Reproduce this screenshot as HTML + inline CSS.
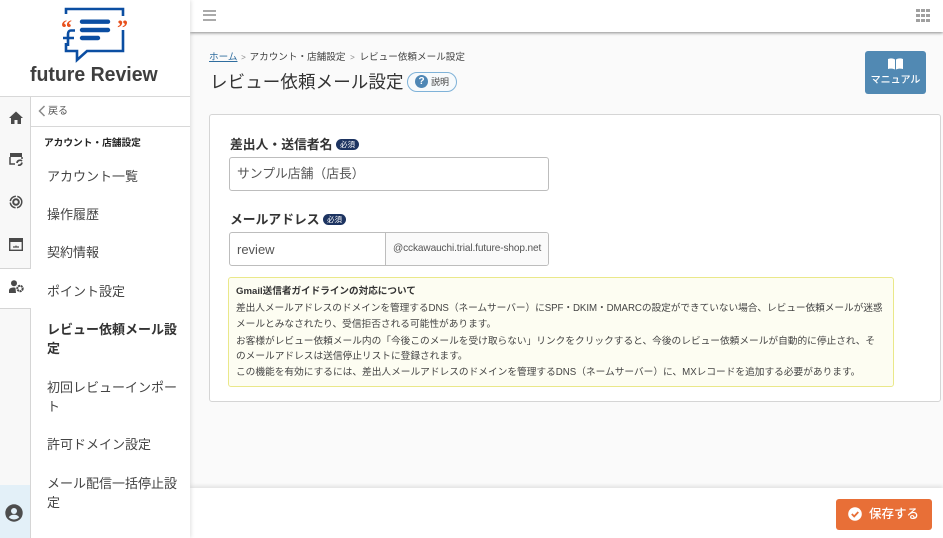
<!DOCTYPE html>
<html lang="ja"><head><meta charset="utf-8"><title>レビュー依頼メール設定</title>
<style>
*{box-sizing:border-box;margin:0;padding:0}
html,body{width:943px;height:538px;overflow:hidden;background:#fafafa;font-family:"Liberation Sans","Noto Sans CJK JP",sans-serif;color:#333;text-spacing-trim:space-all}
.a{position:absolute;white-space:nowrap}
.nav{position:absolute;left:47px;font-size:13px;line-height:19px;color:#444;width:131px}
.req{position:absolute;background:#1d3461;color:#fff;font-size:7.5px;line-height:11px;height:11px;width:23px;text-align:center;border-radius:5.5px}
.lab{position:absolute;left:230px;font-size:12.8px;font-weight:700;color:#333;white-space:nowrap;line-height:18px}
.p{position:absolute;left:236px;font-size:9.7px;line-height:16px;color:#444;white-space:nowrap}
.sep{color:#888;font-size:8px;margin:0 2px}
</style></head><body>
<!-- main top bar -->
<div class="a" style="left:190px;top:0;width:753px;height:32px;background:#fff;box-shadow:0 1px 3px rgba(0,0,0,.45)"></div>
<div class="a" style="left:203px;top:10px;width:13px;height:2px;background:#aaa"></div>
<div class="a" style="left:203px;top:14px;width:13px;height:2px;background:#aaa"></div>
<div class="a" style="left:203px;top:19px;width:13px;height:2px;background:#aaa"></div>
<svg class="a" style="left:916px;top:9px" width="14" height="13" fill="#a0a0a0"><rect x="0" y="0" width="4" height="3"/><rect x="5" y="0" width="4" height="3"/><rect x="10" y="0" width="4" height="3"/><rect x="0" y="5" width="4" height="3"/><rect x="5" y="5" width="4" height="3"/><rect x="10" y="5" width="4" height="3"/><rect x="0" y="10" width="4" height="3"/><rect x="5" y="10" width="4" height="3"/><rect x="10" y="10" width="4" height="3"/></svg>

<!-- footer -->
<div class="a" style="left:190px;top:488px;width:753px;height:50px;background:#fff;box-shadow:0 -2px 4px rgba(0,0,0,.1)"></div>

<!-- sidebar -->
<div class="a" style="left:0;top:0;width:190px;height:538px;background:#fff;box-shadow:1px 0 4px rgba(0,0,0,.12)"></div>
<svg class="a" style="left:60px;top:6px" width="72" height="58" fill="none">
<path d="M6 8V3H63V10M63 24V45H27L17 54V45H6V37" stroke="#0b4ea2" stroke-width="2.6"/>
<path d="M22 15.700H48M22 24H48M22 32H38" stroke="#0b4ea2" stroke-width="4.400" stroke-linecap="round"/>
<path d="M15 24.500H11C9 24.500 8 26 8 28V40M3 32H14" stroke="#0b4ea2" stroke-width="2.600"/>
<text x="1" y="29" font-family="Liberation Serif" font-size="22" font-weight="700" fill="#e8501c">“</text>
<text x="57" y="29" font-family="Liberation Serif" font-size="22" font-weight="700" fill="#e8501c">”</text>
</svg>
<div class="a" style="left:30px;top:63px;font-size:20.500px;font-weight:700;color:#3f3f3f;line-height:24px;transform:scaleX(.95);transform-origin:0 0">future Review</div>
<div class="a" style="left:0;top:96px;width:190px;height:1px;background:#d8d8d8"></div>
<div class="a" style="left:31px;top:126px;width:159px;height:1px;background:#d8d8d8"></div>
<!-- rail -->
<div class="a" style="left:0;top:97px;width:31px;height:172px;background:#f8f8f8;border-right:1px solid #d5d5d5;border-bottom:1px solid #d5d5d5"></div>
<div class="a" style="left:0;top:308px;width:31px;height:177px;background:#f8f8f8;border-right:1px solid #d5d5d5;border-top:1px solid #d5d5d5"></div>
<div class="a" style="left:0;top:485px;width:31px;height:53px;background:#e3f0f8;border-right:1px solid #d5d5d5"></div>
<svg class="a" style="left:9px;top:111px" width="14" height="13" fill="#4a4a4a"><path d="M7 .500 14 7H12V13H8.500V9H5.500V13H2V7H0Z"/></svg>
<svg class="a" style="left:9px;top:152px" width="15" height="14" fill="none"><path d="M1 1H13V5H1Z" fill="#4a4a4a"/><path d="M1 5V12H6M13 5V7" stroke="#4a4a4a" stroke-width="1.500"/><path d="M8 11A3 3 0 0 1 13 9M13 10.500A3 3 0 0 1 9 13" stroke="#4a4a4a" stroke-width="1.700"/></svg>
<svg class="a" style="left:9px;top:195px" width="14" height="14" fill="none"><circle cx="7" cy="7" r="5.800" stroke="#4a4a4a" stroke-width="1.500" stroke-dasharray="8 1.500"/><circle cx="7" cy="7" r="2.800" stroke="#4a4a4a" stroke-width="2"/></svg>
<svg class="a" style="left:9px;top:238px" width="14" height="13" fill="none"><rect x=".7" y=".7" width="12.600" height="11.600" stroke="#4a4a4a" stroke-width="1.400"/><rect x="1" y="1" width="12" height="3" fill="#4a4a4a"/><path d="M4 9H10" stroke="#4a4a4a" stroke-width="1.200"/><path d="M7 7.500V9" stroke="#4a4a4a"/></svg>
<svg class="a" style="left:9px;top:280px" width="15" height="13" fill="#4a4a4a"><circle cx="5" cy="3.300" r="3"/><path d="M0 13V10.500C0 8.500 2 7.500 5 7.500 5.500 7.500 6 7.500 6.500 8L7 13Z"/><circle cx="11" cy="8.500" r="2.700" fill="none" stroke="#4a4a4a" stroke-width="2" stroke-dasharray="2 .6"/></svg>
<svg class="a" style="left:5px;top:504px" width="18" height="18"><circle cx="9" cy="9" r="8.700" fill="#4d4d4d"/><circle cx="9" cy="7" r="3" fill="#e3f0f8"/><path d="M3.800 13.300C5 11.300 7 10.800 9 10.800S13 11.300 14.200 13.300C13 14.700 11 15.500 9 15.500S5 14.700 3.800 13.300Z" fill="#e3f0f8"/></svg>
<!-- menu -->
<svg class="a" style="left:38px;top:105px" width="8" height="12" fill="none"><path d="M6.500 1 1.500 6 6.500 11" stroke="#8a8a8a" stroke-width="1.500"/></svg>
<div class="a" style="left:48px;top:105px;font-size:10px;line-height:14px;color:#555">戻る</div>
<div class="a" style="left:44px;top:136px;font-size:9.700px;line-height:15px;font-weight:700;color:#222">アカウント・店舗設定</div>
<div class="nav" style="top:167px">アカウント一覧</div>
<div class="nav" style="top:205px">操作履歴</div>
<div class="nav" style="top:243px">契約情報</div>
<div class="nav" style="top:282px">ポイント設定</div>
<div class="nav" style="top:320px;font-weight:700;color:#333">レビュー依頼メール設定</div>
<div class="nav" style="top:378px">初回レビューインポート</div>
<div class="nav" style="top:435px">許可ドメイン設定</div>
<div class="nav" style="top:474px">メール配信一括停止設定</div>

<!-- heading -->
<div class="a" style="left:209px;top:51px;font-size:9.600px;line-height:14px;color:#444"><span style="color:#2f6d9f;text-decoration:underline">ホーム</span> <span class="sep" style="margin:0 1px">&gt;</span> アカウント・店舗設定 <span class="sep">&gt;</span> レビュー依頼メール設定</div>
<div class="a" style="left:210px;top:70px;font-size:17.500px;line-height:24px;color:#333;letter-spacing:.1px">レビュー依頼メール設定</div>
<div class="a" style="left:407px;top:72px;width:50px;height:20px;border:1px solid #7fb2d8;border-radius:10px;background:#f7fafc"></div>
<div class="a" style="left:415px;top:75px;width:13px;height:13px;border-radius:50%;background:#4f87b5;color:#fff;font-size:10px;font-weight:700;line-height:13px;text-align:center">?</div>
<div class="a" style="left:431px;top:75px;font-size:9px;line-height:14px;color:#444">説明</div>
<div class="a" style="left:865px;top:51px;width:61px;height:43px;background:#5189b3;border-radius:3px"></div>
<svg class="a" style="left:888px;top:58px" width="15" height="12" fill="#fff"><path d="M0 1C2.500 0 5 .3 7 1.500V11.500C5 10.500 2.500 10.300 0 11ZM15 1C12.500 0 10 .3 8 1.500V11.500C10 10.500 12.500 10.300 15 11Z"/></svg>
<div class="a" style="left:865px;top:74px;width:61px;text-align:center;font-size:10px;font-weight:500;line-height:14px;color:#fff">マニュアル</div>

<!-- card -->
<div class="a" style="left:209px;top:114px;width:732px;height:288px;background:#fff;border:1px solid #d5d5d5;border-radius:3px"></div>
<div class="lab" style="top:136px">差出人・送信者名</div>
<div class="req" style="left:336px;top:139px">必須</div>
<div class="a" style="left:229px;top:157px;width:320px;height:34px;border:1px solid #bdbdbd;border-radius:3px;background:#fff;padding-left:7px;font-size:12.800px;line-height:31px;color:#555">サンプル店舗（店長）</div>
<div class="lab" style="top:211px">メールアドレス</div>
<div class="req" style="left:323px;top:214px">必須</div>
<div class="a" style="left:229px;top:232px;width:320px;height:34px;border:1px solid #bdbdbd;border-radius:3px;background:#fff;overflow:hidden">
<div class="a" style="left:7px;top:0;font-size:13px;line-height:33px;color:#555">review</div>
<div class="a" style="left:155px;top:0;width:164px;height:32px;background:#fafafa;border-left:1px solid #bdbdbd;padding-left:7px;font-size:10.100px;letter-spacing:-.12px;line-height:31px;color:#555">@cckawauchi.trial.future-shop.net</div>
</div>
<!-- notice -->
<div class="a" style="left:228px;top:277px;width:666px;height:110px;background:#fdfdf2;border:1px solid #eae88a;border-radius:3px"></div>
<div class="p" style="top:284px;font-weight:700;color:#333;font-size:9.600px">Gmail送信者ガイドラインの対応について</div>
<div class="p" style="top:301px;letter-spacing:-.06px">差出人メールアドレスのドメインを管理するDNS（ネームサーバー）にSPF・DKIM・DMARCの設定ができていない場合、レビュー依頼メールが迷惑</div>
<div class="p" style="top:317px">メールとみなされたり、受信拒否される可能性があります。</div>
<div class="p" style="top:334px">お客様がレビュー依頼メール内の「今後このメールを受け取らない」リンクをクリックすると、今後のレビュー依頼メールが自動的に停止され、そ</div>
<div class="p" style="top:349px">のメールアドレスは送信停止リストに登録されます。</div>
<div class="p" style="top:365px">この機能を有効にするには、差出人メールアドレスのドメインを管理するDNS（ネームサーバー）に、MXレコードを追加する必要があります。</div>

<div class="a" style="left:836px;top:499px;width:96px;height:31px;background:#e86f37;border-radius:3px"></div>
<svg class="a" style="left:848px;top:507px" width="14" height="14"><circle cx="7" cy="7" r="6.800" fill="#fff"/><path d="M3.800 7 6.200 9.400 10.300 5" fill="none" stroke="#e86f37" stroke-width="1.800"/></svg>
<div class="a" style="left:869px;top:505px;font-size:12.500px;font-weight:500;line-height:18px;color:#fff">保存する</div>
</body></html>
